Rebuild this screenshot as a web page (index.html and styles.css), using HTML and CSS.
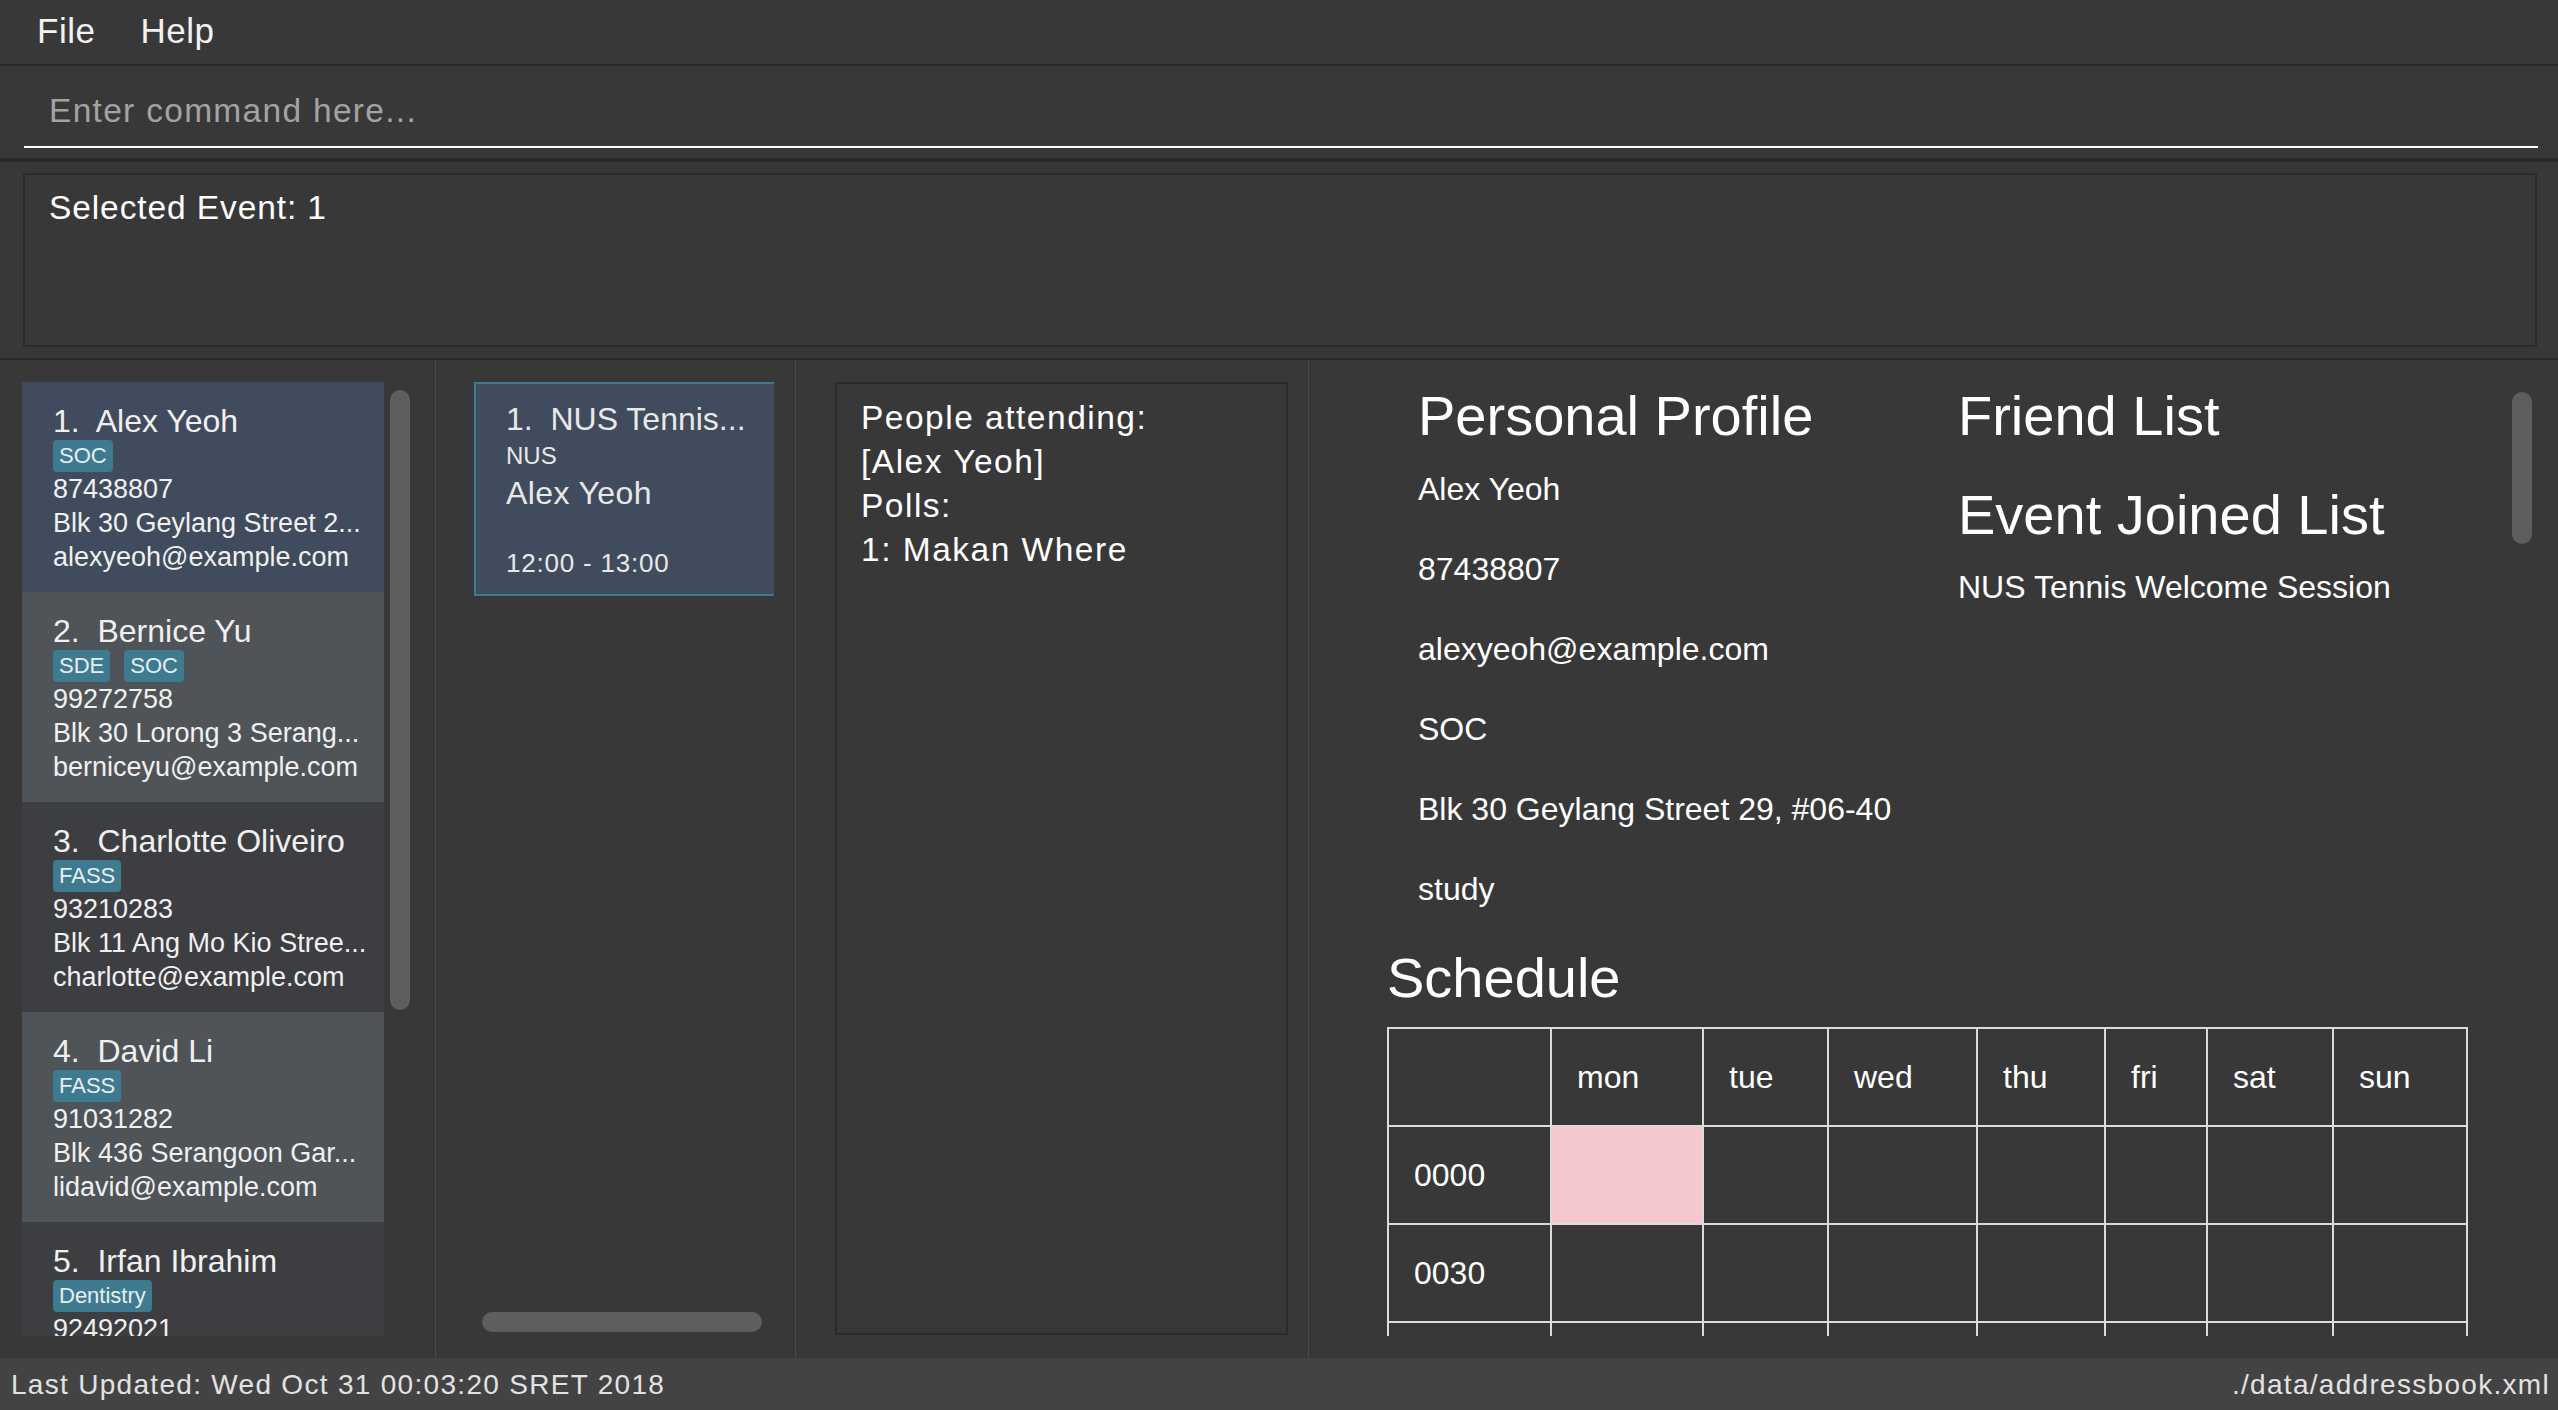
FILE: index.html
```html
<!DOCTYPE html>
<html lang="en">
<head>
<meta charset="utf-8">
<title>Address Book</title>
<link rel="stylesheet" href="styles.css">
</head>
<body>
<div class="app">
  <div class="menubar"><span>File</span><span>Help</span></div>
  <div class="command"><div class="cmd-input">Enter command here...</div></div>
  <div class="result"><div class="result-box">Selected Event: 1</div></div>
  <div class="main">
    <div class="col-people">
      <div class="people-list">
        <div class="card sel">
          <div class="name">1.&nbsp; Alex Yeoh</div>
          <div class="tags"><span class="tag">SOC</span></div>
          <div class="line">87438807</div>
          <div class="line">Blk 30 Geylang Street 2...</div>
          <div class="line">alexyeoh@example.com</div>
        </div>
        <div class="card even">
          <div class="name">2.&nbsp; Bernice Yu</div>
          <div class="tags"><span class="tag">SDE</span><span class="tag">SOC</span></div>
          <div class="line">99272758</div>
          <div class="line">Blk 30 Lorong 3 Serang...</div>
          <div class="line">berniceyu@example.com</div>
        </div>
        <div class="card odd">
          <div class="name">3.&nbsp; Charlotte Oliveiro</div>
          <div class="tags"><span class="tag">FASS</span></div>
          <div class="line">93210283</div>
          <div class="line">Blk 11 Ang Mo Kio Stree...</div>
          <div class="line">charlotte@example.com</div>
        </div>
        <div class="card even">
          <div class="name">4.&nbsp; David Li</div>
          <div class="tags"><span class="tag">FASS</span></div>
          <div class="line">91031282</div>
          <div class="line">Blk 436 Serangoon Gar...</div>
          <div class="line">lidavid@example.com</div>
        </div>
        <div class="card odd last">
          <div class="name">5.&nbsp; Irfan Ibrahim</div>
          <div class="tags"><span class="tag">Dentistry</span></div>
          <div class="line">92492021</div>
        </div>
      </div>
      <div class="vscroll"></div>
    </div>
    <div class="col-events">
      <div class="event-card">
        <div class="ev-title">1.&nbsp; NUS Tennis...</div>
        <div class="ev-org">NUS</div>
        <div class="ev-owner">Alex Yeoh</div>
        <div class="ev-time">12:00 - 13:00</div>
      </div>
      <div class="hscroll"></div>
    </div>
    <div class="col-details">
      <div class="details-box">
        <div>People attending:</div>
        <div>[Alex Yeoh]</div>
        <div>Polls:</div>
        <div>1: Makan Where</div>
      </div>
    </div>
    <div class="col-profile">
      <div class="profile-scroll">
        <div class="profile-cols">
          <div class="pcol-left">
            <h2 class="heading">Personal Profile</h2>
            <div class="pitems">
              <p class="pitem">Alex Yeoh</p>
              <p class="pitem">87438807</p>
              <p class="pitem">alexyeoh@example.com</p>
              <p class="pitem">SOC</p>
              <p class="pitem">Blk 30 Geylang Street 29, #06-40</p>
              <p class="pitem">study</p>
            </div>
          </div>
          <div class="pcol-right">
            <h2 class="heading">Friend List</h2>
            <h2 class="heading joined-title">Event Joined List</h2>
            <p class="joined">NUS Tennis Welcome Session</p>
          </div>
        </div>
        <h2 class="heading schedule-title">Schedule</h2>
        <table class="schedule">
          <colgroup>
            <col class="c0"><col class="c1"><col class="c2"><col class="c3"><col class="c4"><col class="c5"><col class="c6"><col class="c7">
          </colgroup>
          <tr><td></td><td>mon</td><td>tue</td><td>wed</td><td>thu</td><td>fri</td><td>sat</td><td>sun</td></tr>
          <tr><td>0000</td><td class="busy"></td><td></td><td></td><td></td><td></td><td></td><td></td></tr>
          <tr><td>0030</td><td></td><td></td><td></td><td></td><td></td><td></td><td></td></tr>
          <tr><td></td><td></td><td></td><td></td><td></td><td></td><td></td><td></td></tr>
        </table>
      </div>
      <div class="pscroll"></div>
    </div>
  </div>
  <div class="status"><span>Last Updated: Wed Oct 31 00:03:20 SRET 2018</span><span>./data/addressbook.xml</span></div>
</div>
</body>
</html>
```
FILE: styles.css
```css
* { box-sizing: border-box; }
html, body { margin: 0; padding: 0; }
body {
  width: 2558px;
  height: 1410px;
  overflow: hidden;
  background: #383838;
  font-family: "Liberation Sans", Arial, sans-serif;
  color: #f0f0f0;
}
.app { display: flex; flex-direction: column; height: 1410px; }

.menubar {
  height: 66px;
  border-bottom: 2px solid #2a2a2a;
  display: flex;
  gap: 45px;
  padding-left: 37px;
  font-size: 35px;
  line-height: 62px;
  letter-spacing: 0.5px;
  color: #f2f2f2;
}
.command {
  height: 96px;
  border-bottom: 4px solid #282828;
  padding: 25px 20px 0 24px;
}
.cmd-input {
  border-bottom: 2px solid #ffffff;
  padding: 0 0 15px 25px;
  font-size: 33.5px;
  line-height: 40px;
  letter-spacing: 1.3px;
  color: #a3a3a3;
}
.result {
  height: 198px;
  border-bottom: 2px solid #2a2a2a;
  padding: 11px 21px 11px 23px;
}
.result-box {
  height: 174px;
  border: 2px solid #2b2b2b;
  padding: 13px 24px;
  font-size: 33.5px;
  line-height: 40px;
  letter-spacing: 0.9px;
  color: #ffffff;
}

.main { flex: 1; display: flex; min-height: 0; }

.col-people {
  width: 436px;
  border-right: 1px solid #4a4a4a;
  display: flex;
  gap: 6px;
  padding: 22px 0 22px 22px;
}
.people-list { width: 362px; overflow: hidden; }
.vscroll {
  width: 20px;
  height: 620px;
  margin-top: 8px;
  background: #5e5e5e;
  border-radius: 10px;
}
.card { height: 210px; padding: 19px 8px 0 31px; color: #f0f0f0; }
.card.last { height: 114px; overflow: hidden; }
.card.sel { background: #404b5d; }
.card.even { background: #4f5458; }
.card.odd { background: #3c3e41; }
.name { font-size: 32px; line-height: 40px; white-space: nowrap; }
.tags { height: 31px; display: flex; gap: 14px; }
.tag {
  height: 32px;
  margin-top: -1px;
  padding: 0 6px;
  font-size: 22px;
  line-height: 32px;
  border-radius: 4px;
  background: #3e7b91;
  color: #e8eef0;
}
.line { font-size: 27px; line-height: 34px; white-space: nowrap; }

.col-events {
  width: 360px;
  border-right: 1px solid #4a4a4a;
  display: flex;
  flex-direction: column;
  padding: 22px 0 26px 38px;
}
.event-card {
  width: 300px;
  height: 214px;
  border: 2px solid #3e7b91;
  border-right: none;
  background: #404b5d;
  padding: 15px 0 0 30px;
  color: #e8e8e8;
  white-space: nowrap;
}
.ev-title { font-size: 32px; line-height: 40px; }
.ev-org { font-size: 24px; line-height: 34px; }
.ev-owner { font-size: 32px; line-height: 40px; letter-spacing: 0.4px; }
.ev-time { margin-top: 33px; font-size: 26px; line-height: 34px; letter-spacing: 0.8px; }
.hscroll {
  margin-top: auto;
  margin-left: 8px;
  width: 280px;
  height: 20px;
  border-radius: 10px;
  background: #5e5e5e;
}

.col-details {
  width: 513px;
  border-right: 1px solid #4a4a4a;
  padding: 22px 20px 23px 39px;
}
.details-box {
  height: 100%;
  border: 2px solid #2b2b2b;
  padding: 12px 24px;
  font-size: 33.5px;
  line-height: 44px;
  letter-spacing: 1.5px;
  color: #ffffff;
}

.col-profile { flex: 1; position: relative; padding-bottom: 22px; }
.profile-scroll {
  height: 976px;
  overflow: hidden;
  padding: 24px 0 0 78px;
  color: #ffffff;
}
.profile-cols { display: flex; padding-left: 31px; }
.pcol-left { width: 540px; }
.heading { margin: 0; font-size: 56px; line-height: 64px; font-weight: normal; }
.pitems { padding-top: 1px; }
.pitem { margin: 0; font-size: 32px; line-height: 80px; }
.joined-title { margin-top: 35px; }
.joined { margin: 20px 0 0; font-size: 32px; line-height: 40px; }
.schedule-title { margin: 17px 0 17px; }

.schedule {
  border-collapse: collapse;
  table-layout: fixed;
  width: 1081px;
  font-size: 32px;
  color: #ffffff;
}
.schedule td {
  border: 2px solid #dcdcdc;
  height: 98px;
  padding: 0 0 0 25px;
  vertical-align: middle;
}
.schedule td.busy { background: #f5c8ce; }
.c0 { width: 163px; }
.c1 { width: 152px; }
.c2 { width: 125px; }
.c3 { width: 149px; }
.c4 { width: 128px; }
.c5 { width: 102px; }
.c6 { width: 126px; }
.c7 { width: 134px; }

.pscroll {
  position: absolute;
  right: 26px;
  top: 32px;
  width: 20px;
  height: 152px;
  border-radius: 10px;
  background: #5e5e5e;
}

.status {
  height: 52px;
  background: #434343;
  display: flex;
  justify-content: space-between;
  padding: 1px 8px 0 11px;
  font-size: 28px;
  line-height: 51px;
  letter-spacing: 1.3px;
  color: #e2e2e2;
  white-space: nowrap;
}
```
